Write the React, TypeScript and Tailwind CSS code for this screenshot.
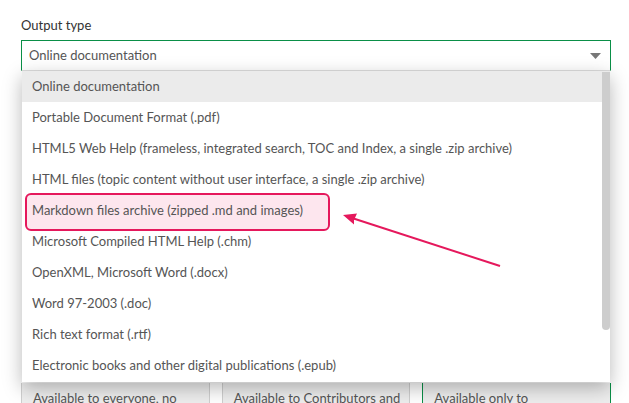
import React from "react";

const options = [
  "Online documentation",
  "Portable Document Format (.pdf)",
  "HTML5 Web Help (frameless, integrated search, TOC and Index, a single .zip archive)",
  "HTML files (topic content without user interface, a single .zip archive)",
  "Markdown files archive (zipped .md and images)",
  "Microsoft Compiled HTML Help (.chm)",
  "OpenXML, Microsoft Word (.docx)",
  "Word 97-2003 (.doc)",
  "Rich text format (.rtf)",
  "Electronic books and other digital publications (.epub)",
];

const cards = [
  { text: "Available to everyone, no", active: false },
  { text: "Available to Contributors and", active: false },
  { text: "Available only to", active: true },
];

export default function App() {
  return (
    <div className="relative h-[403px] w-[629px] overflow-hidden bg-white font-['Lato',sans-serif] text-[13px]">
      <div className="pl-[21px] pr-[18px] pt-[16px]">
        <div className="h-[18px] leading-[18px] text-[#333]">Output type</div>
        <div className="mt-[6px] flex h-[31px] items-center justify-between border border-[#0a8f47] border-b-[#ddd] pl-[7px] pr-[8px] text-[#555]">
          <span>Online documentation</span>
          <svg width="11" height="6" viewBox="0 0 11 6" className="mr-[1px]">
            <path d="M0 0 L11 0 L5.5 6 Z" fill="#777" />
          </svg>
        </div>

        <div className="mt-[312px] grid grid-cols-3 gap-3">
          {cards.map((c) => (
            <div
              key={c.text}
              className={
                "h-[40px] overflow-hidden whitespace-nowrap border-x bg-[#eeeeee] px-[11px] pt-[6px] text-[#555] " +
                (c.active ? "border-[#0a8f47]" : "border-[#cfcfcf]")
              }
            >
              {c.text}
            </div>
          ))}
        </div>
      </div>

      {/* dropdown list */}
      <div className="absolute left-[22px] top-[71px] h-[311px] w-[588px] bg-white shadow-[0_6px_18px_rgba(0,0,0,0.28)]">
        {options.map((o, i) => (
          <div
            key={o}
            className={
              "relative flex h-[31px] items-center pl-[10px] pt-[1px] text-[#555] " +
              (i === 0 ? "bg-[#ebebeb]" : "")
            }
          >
            {i === 4 && (
              <div className="absolute -bottom-[5px] -top-[2px] left-[3px] w-[305px] rounded-[6px] border-2 border-[#e5185c] bg-[#fde6ee]" />
            )}
            <span className="relative">{o}</span>
          </div>
        ))}
        <div className="absolute right-0 top-[1px] h-[258px] w-[8px] rounded-b-[4px] bg-[#cdcdcd]" />
      </div>

      {/* annotation arrow */}
      <svg className="absolute left-0 top-0" width="629" height="403">
        <line x1="500" y1="266" x2="352" y2="218" stroke="#e5185c" strokeWidth="2" />
        <path d="M343 215 L357 213.5 L354 220 L354 224.5 Z" fill="#e5185c" />
      </svg>
    </div>
  );
}
